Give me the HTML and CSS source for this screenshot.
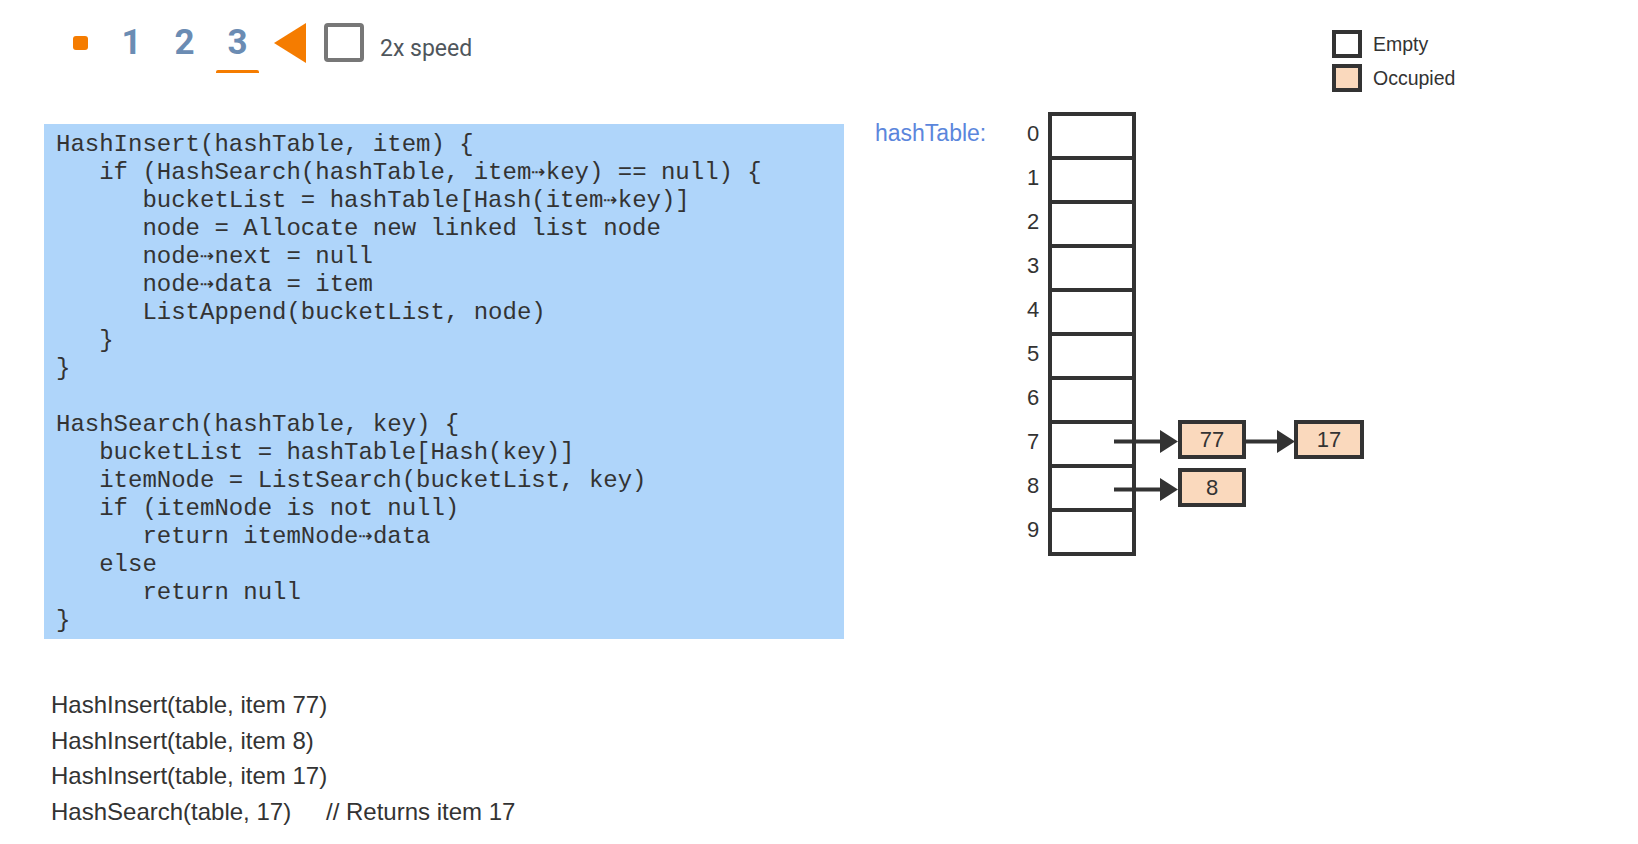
FILE: index.html
```html
<!DOCTYPE html>
<html>
<head>
<meta charset="utf-8">
<title>Hash table with chaining</title>
<link rel="stylesheet" href="styles.css">
</head>
<body>
<div class="top">
  <div class="controls">
    <span class="stop"></span>
    <span class="step">1</span>
    <span class="step">2</span>
    <span class="step active">3</span>
    <span class="play"></span>
    <span class="check"></span>
    <span class="speed">2x speed</span>
  </div>
  <div class="legend">
    <div class="legend-row"><span class="swatch"></span>Empty</div>
    <div class="legend-row"><span class="swatch occ"></span>Occupied</div>
  </div>
</div>
<div class="main">
<pre class="code">HashInsert(hashTable, item) {
   if (HashSearch(hashTable, item⇢key) == null) {
      bucketList = hashTable[Hash(item⇢key)]
      node = Allocate new linked list node
      node⇢next = null
      node⇢data = item
      ListAppend(bucketList, node)
   }
}

HashSearch(hashTable, key) {
   bucketList = hashTable[Hash(key)]
   itemNode = ListSearch(bucketList, key)
   if (itemNode is not null)
      return itemNode⇢data
   else
      return null
}</pre>
  <div class="diagram">
    <div class="label">hashTable:</div>
    <div class="indices">
      <div>0</div><div>1</div><div>2</div><div>3</div><div>4</div>
      <div>5</div><div>6</div><div>7</div><div>8</div><div>9</div>
    </div>
    <div class="table">
      <div class="cell"></div><div class="cell"></div><div class="cell"></div><div class="cell"></div><div class="cell"></div>
      <div class="cell"></div><div class="cell"></div><div class="cell"></div><div class="cell"></div><div class="cell"></div>
    </div>
    <svg class="arrows" width="300" height="120" viewBox="0 0 300 120">
      <g fill="#333" stroke="#333">
        <line x1="14" y1="41.5" x2="62" y2="41.5" stroke-width="4"/>
        <polygon points="60,30 78,41.5 60,53" stroke="none"/>
        <line x1="146" y1="41.5" x2="179" y2="41.5" stroke-width="4"/>
        <polygon points="177,30 195,41.5 177,53" stroke="none"/>
        <line x1="14" y1="89.5" x2="62" y2="89.5" stroke-width="4"/>
        <polygon points="60,78 78,89.5 60,101" stroke="none"/>
      </g>
    </svg>
    <div class="node n77">77</div>
    <div class="node n17">17</div>
    <div class="node n8">8</div>
  </div>
</div>
<div class="calls">
  <div>HashInsert(table, item 77)</div>
  <div>HashInsert(table, item 8)</div>
  <div>HashInsert(table, item 17)</div>
  <div><span class="fn">HashSearch(table, 17)</span><span>// Returns item 17</span></div>
</div>
</body>
</html>
```

FILE: styles.css
```css
* { box-sizing: border-box; }
html, body { margin: 0; background: #fff; }
body {
  width: 1638px;
  font-family: "Liberation Sans", Arial, sans-serif;
  color: #333;
}

/* top controls */
.top {
  display: flex;
  height: 112px;
  padding: 22px 0 0 73px;
}
.controls {
  display: flex;
  align-items: center;
  height: 41px;
}
.stop {
  width: 15px;
  height: 14px;
  background: #f57c00;
  border-radius: 3px;
  margin-right: 17px;
}
.step {
  position: relative;
  width: 53px;
  text-align: center;
  font-family: Roboto, sans-serif;
  font-weight: 700;
  font-size: 35px;
  line-height: 34px;
  color: #6b8cb3;
}
.step.active::after {
  content: "";
  position: absolute;
  left: 5px;
  right: 5px;
  top: 44px;
  height: 3px;
  background: #f57c00;
  border-radius: 2px 2px 0 0;
}
.play {
  width: 0;
  height: 0;
  margin-left: 10px;
  border-top: 20px solid transparent;
  border-bottom: 20px solid transparent;
  border-right: 32px solid #f57c00;
}
.check {
  width: 40px;
  height: 39px;
  margin-left: 18px;
  border: 4px solid #777;
  border-radius: 4px;
}
.speed {
  margin-left: 16px;
  margin-top: 11px;
  font-family: Roboto, sans-serif;
  font-size: 23px;
  color: #4f565c;
}

/* legend */
.legend {
  margin-left: auto;
  margin-right: 176px;
  margin-top: 8px;
  width: 130px;
  display: flex;
  flex-direction: column;
  gap: 6px;
}
.legend-row {
  display: flex;
  align-items: center;
  gap: 11px;
  height: 28px;
  font-size: 19.5px;
  color: #333;
}
.swatch {
  width: 30px;
  height: 28px;
  border: 4px solid #333;
  background: #fff;
}
.swatch.occ { background: #fad9bd; }

/* main */
.main {
  display: flex;
  align-items: flex-start;
  padding-left: 44px;
}
.code {
  margin: 12px 0 0;
  width: 800px;
  padding: 7px 12px 4px;
  background: #afd5fa;
  font-family: "Liberation Mono", "DejaVu Sans Mono", monospace;
  font-size: 24px;
  line-height: 28px;
  color: #333;
}

.diagram {
  position: relative;
  display: flex;
  align-items: flex-start;
  margin-left: 31px;
}
.label {
  width: 152px;
  margin-top: 8px;
  font-size: 23px;
  color: #5b86dc;
}
.indices {
  width: 21px;
  font-size: 22px;
  line-height: 44px;
  color: #333;
}
.table {
  width: 88px;
  border: 4px solid #333;
}
.cell {
  height: 44px;
  border-bottom: 4px solid #333;
}
.cell:last-child {
  height: 40px;
  border-bottom: 0;
}
.arrows {
  position: absolute;
  left: 225px;
  top: 288px;
}
.node {
  position: absolute;
  height: 39px;
  border: 4px solid #333;
  background: #fad9bd;
  font-size: 22px;
  line-height: 31px;
  text-align: center;
  color: #333;
}
.n77 { left: 303px; top: 308px; width: 68px; }
.n17 { left: 419px; top: 308px; width: 70px; }
.n8  { left: 303px; top: 356px; width: 68px; }

/* calls */
.calls {
  margin-top: 48px;
  padding-left: 51px;
  font-size: 24px;
  line-height: 35.5px;
  color: #333;
}
.fn {
  display: inline-block;
  width: 275px;
}
```
